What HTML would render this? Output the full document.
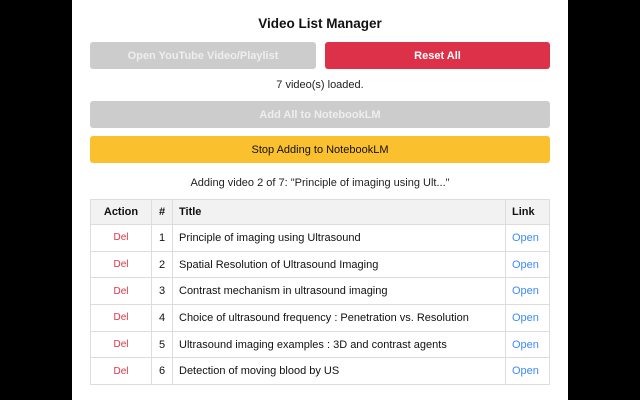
<!DOCTYPE html>
<html><head><style>
body{margin:0;width:640px;height:400px;background:#000;font-family:"Liberation Sans",Arial,sans-serif;overflow:hidden}
.p{position:absolute;left:72px;top:0;width:496px;height:400px;background:#fff}
h1{position:absolute;left:0;width:496px;top:16px;margin:0;text-align:center;font-size:13.5px;font-weight:bold;color:#111}
.b{position:absolute;border-radius:3px;color:#fff;font-size:11px;font-weight:bold;text-align:center;line-height:28px;height:27px}
.t{position:absolute;left:0;width:496px;text-align:center;font-size:11px;color:#222}
table{position:absolute;left:18px;top:199px;width:460px;border-collapse:collapse;font-size:11px}
td,th{border:1px solid #ddd;height:25.7px;padding:0 6px;color:#111}
th{background:#f2f2f2;font-weight:bold;text-align:left;height:24px}
.c{text-align:center}
.d{color:#dc3545;text-align:center;font-size:10px}
.o{color:#3d8bf5}
</style></head><body>
<div class="p">
<h1>Video List Manager</h1>
<div class="b" style="left:18px;top:42px;width:226px;background:#ccc;color:#eee">Open YouTube Video/Playlist</div>
<div class="b" style="left:253px;top:42px;width:225px;background:#dc3148">Reset All</div>
<div class="t" style="top:79px">7 video(s) loaded.</div>
<div class="b" style="left:18px;top:101px;width:460px;background:#ccc;color:#eee">Add All to NotebookLM</div>
<div class="b" style="left:18px;top:136px;width:460px;background:#fbc02d;color:#111;font-weight:normal">Stop Adding to NotebookLM</div>
<div class="t" style="top:177px">Adding video 2 of 7: "Principle of imaging using Ult..."</div>
<table>
<tr><th class="c" style="width:48px">Action</th><th class="c" style="width:8px">#</th><th>Title</th><th style="width:31px">Link</th></tr>
<tr><td class="d">Del</td><td class="c">1</td><td>Principle of imaging using Ultrasound</td><td class="o">Open</td></tr>
<tr><td class="d">Del</td><td class="c">2</td><td>Spatial Resolution of Ultrasound Imaging</td><td class="o">Open</td></tr>
<tr><td class="d">Del</td><td class="c">3</td><td>Contrast mechanism in ultrasound imaging</td><td class="o">Open</td></tr>
<tr><td class="d">Del</td><td class="c">4</td><td>Choice of ultrasound frequency : Penetration vs. Resolution</td><td class="o">Open</td></tr>
<tr><td class="d">Del</td><td class="c">5</td><td>Ultrasound imaging examples : 3D and contrast agents</td><td class="o">Open</td></tr>
<tr><td class="d">Del</td><td class="c">6</td><td>Detection of moving blood by US</td><td class="o">Open</td></tr>
</table>
</div>
</body></html>
